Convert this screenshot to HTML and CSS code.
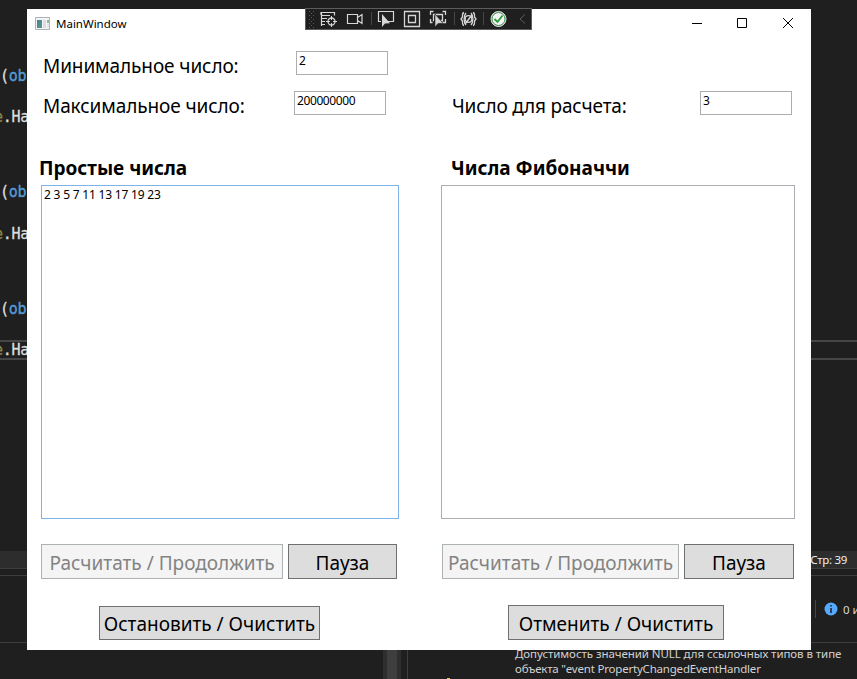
FILE: index.html
```html
<!DOCTYPE html>
<html lang="ru">
<head>
<meta charset="utf-8">
<title>MainWindow</title>
<link rel="stylesheet" href="styles.css">
</head>
<body>
<div class="desktop">
  <main class="editor">
    <div class="line signature"><b>(</b>ob</div>
    <div class="line call"><i>e</i>.Ha</div>
    <div class="line signature gap"><b>(</b>ob</div>
    <div class="line call"><i>e</i>.Ha</div>
    <div class="line signature gap"><b>(</b>ob</div>
    <div class="line call current"><i>e</i>.Ha</div>
  </main>
  <footer class="caret-bar"><span>Стр: 39</span></footer>
  <section class="errors">
    <div class="error-tools">
      <span class="divider"></span>
      <svg width="14" height="14" viewBox="0 0 14 14"><circle cx="7" cy="7" r="6.5" fill="#55aaff"/><path d="M7 3v1.6M7 6v5" stroke="#1f1f1f" stroke-width="1.5"/></svg>
      <span class="count">0 и</span>
    </div>
    <div class="error-body">
      <div class="scroll"></div>
      <div class="error-list"><span class="warn"></span><p><span class="msg1">Допустимость значений NULL для ссылочных типов в типе</span><br><span class="msg2">объекта "event PropertyChangedEventHandler</span></p></div>
    </div>
  </section>

  <div class="window">
    <header class="titlebar">
      <svg class="app-icon" width="15" height="13" viewBox="0 0 15 13"><defs><linearGradient id="g" x2="1" y2="1"><stop stop-color="#5277a8"/><stop offset="1" stop-color="#4fa477"/></linearGradient></defs><path fill="#f4f4f4" stroke="#adb3bb" d="M.5.5h14v12H.5z"/><path fill="url(#g)" d="M2 3h5v8H2z"/><path fill="#dcdfe2" d="M8 3h3v8H8z"/><path fill="#8fb99d" d="M12 3h2v3h-2z"/><path fill="#e4e6e8" d="M12 7h2v4h-2z"/></svg>
      <span class="title">MainWindow</span>
      <div class="controls">
        <svg width="46" height="28" viewBox="0 0 46 28"><path d="M18 14.5h10"/></svg>
        <svg width="45" height="28" viewBox="0 0 45 28"><path d="M17.500 9.500h9v9h-9z"/></svg>
        <svg width="46" height="28" viewBox="0 0 46 28"><path d="M18 9l10 10M28 9L18 19"/></svg>
      </div>
    </header>
    <div class="content">
      <section class="column primes">
        <div class="field min"><label>Минимальное число:</label><div class="input">2</div></div>
        <div class="field max"><label>Максимальное число:</label><div class="input">200000000</div></div>
        <h2>Простые числа</h2>
        <div class="output focused">2 3 5 7 11 13 17 19 23</div>
        <div class="actions"><button class="run" disabled><span>Расчитать / Продолжить</span></button><button class="pause"><span>Пауза</span></button></div>
        <button class="stop"><span>Остановить / Очистить</span></button>
      </section>
      <section class="column fib">
        <div class="field"><label>Число для расчета:</label><div class="input">3</div></div>
        <h2>Числа Фибоначчи</h2>
        <div class="output"></div>
        <div class="actions"><button class="run" disabled><span>Расчитать / Продолжить</span></button><button class="pause"><span>Пауза</span></button></div>
        <button class="stop"><span>Отменить / Очистить</span></button>
      </section>
    </div>
  </div>

  <div class="debugbar">
    <svg width="225" height="20" viewBox="0 0 225 20" fill="none" stroke="#d6d6d6">
      <path stroke="#5a5a5a" stroke-dasharray="1 3" d="M3.500 2v17M7.500 2v17"/><path stroke="#5a5a5a" stroke-dasharray="1 3" d="M5.500 4v15"/>
      <path d="M15 3.500h13.500v3M15 3v3M15 6.500h9M15 9.500h6M15 12.500h4M15 15.500h4M15.500 3v14" stroke-width="1.200"/>
      <circle cx="25.500" cy="12.500" r="3.500" stroke-width="1.300"/><path d="M25.500 7v4M25.500 14v4M20 12.500h4M27 12.500h4"/>
      <path d="M41.500 5.500h10v9h-10zM51.500 8.500l4.500-3v9l-4.500-3" stroke-width="1.200"/>
      <path stroke="#464646" d="M65.500 3v13M148.500 3v13M177.500 3v13"/>
      <path d="M75 12.500h-2.500v-10h15v10H82" stroke-width="1.200"/><path fill="#d6d6d6" stroke="none" d="M76 5v13l3-3.500 5-.2z"/>
      <path d="M98.500 2.500h15v15h-15zM102.500 6.500h7v7h-7z" stroke-width="1.300"/>
      <path d="M124.500 6V2.500h3M136.500 2.500h3V6M124.500 10v3.500h2M139.500 10v3.500h-4M128 11.500h-.5v-6h9v6h-2" stroke-width="1.300"/><path fill="#d6d6d6" stroke="#1f1f1f" stroke-width=".6" d="M129 5v13l3-3.500 5-.2z"/>
      <path d="M158 3.500c-2 .5-1.500 3-1.500 4.500l-1.500 2 1.500 2c0 2-.5 4 1.500 4.500M167 3.500c2 .5 1.500 3 1.500 4.500l1.500 2-1.500 2c0 2 .5 4-1.500 4.500M160 4c-2.500 3-2.500 9 0 12M165 4c2.500 3 2.500 9 0 12" stroke-width="1.300"/><circle cx="162.500" cy="10" r="3.300" stroke-width="1.300"/><path d="M159 15l7-9" stroke-width="1.500"/>
      <circle cx="192.500" cy="10" r="7.500" fill="#f5f5f5" stroke="#dedede"/><circle cx="192.500" cy="10" r="6.500" stroke="#388a45"/><path d="M188.500 10l3 3 5-6.500" stroke="#269b38" stroke-width="1.800"/>
      <path d="M219 5.500l-5 4.500 5 4.500" stroke="#5d5d5d"/>
    </svg>
  </div>
</div>
</body>
</html>
```

FILE: styles.css
```css
* { box-sizing: border-box; }
body { margin: 0; background: #1f1f1f; font-family: "Noto Sans", sans-serif; }
.desktop { position: relative; width: 857px; height: 679px; overflow: hidden; display: flex; flex-direction: column; }

.editor { height: 551px; flex: none; padding-top: 66px; display: grid; grid-template-rows: 41px 75px 42px 75px 39px 20px; align-content: start; }
.line { height: 20px; white-space: pre; font: 15px/20px "DejaVu Sans Mono", monospace; letter-spacing: -.3px; color: #dcdcdc; -webkit-text-stroke: .3px; }
.signature { color: #569cd6; }
.line b { font-weight: 400; color: #dcdcdc; }
.line i { font-style: normal; color: #8a8a45; }
.call { text-indent: -6px; overflow: hidden; }
.current { border: solid #464646; border-width: 2px 0; margin-top: 2px; line-height: 16px; }

.caret-bar { height: 18px; flex: none; background: #2d2d2d; border-bottom: 1px solid #3d3d3d; color: #f0f0f0; font-size: 11.500px; line-height: 18px; display: flex; justify-content: flex-end; padding-right: 10px; letter-spacing: -.3px; }
.errors { flex: 1; margin-top: 6px; border-top: 1px solid #3d3d3d; }
.error-tools { height: 67px; border-bottom: 1px solid #3d3d3d; display: flex; align-items: center; padding-left: 815px; color: #d6d6d6; font-size: 11.500px; white-space: nowrap; overflow: hidden; }
.divider { width: 1px; height: 18px; background: #464646; margin-right: 8px; flex: none; }
.error-tools svg { flex: none; margin-right: 5px; }
.error-body { height: 36px; display: flex; padding-left: 383px; }
.scroll { width: 18px; background: #3e3e3e; border: solid #2e2e2e; border-width: 0 4px; }
.error-list { margin-left: 6px; border-left: 1px solid #3d3d3d; flex: 1; display: flex; align-items: flex-end; }
.warn { width: 3px; height: 1px; margin-left: 39px; background: #e8c94a; }
.error-list p { margin: 0 0 3px 65px; font-size: 11.500px; line-height: 15px; letter-spacing: -.07px; color: #d2d2d2; white-space: nowrap; }
.msg2 { letter-spacing: -.2px; }

.window { position: absolute; left: 27px; top: 9px; width: 784px; height: 641px; background: #fff; color: #000; }
.titlebar { height: 28px; display: flex; align-items: center; padding-left: 8px; }
.title { margin-left: 6px; font-size: 11.500px; line-height: 16px; padding-top: 1px; }
.controls { display: flex; margin-left: auto; }
.controls path { fill: none; stroke: #000; }
.content { display: flex; }
.column { display: flex; flex-direction: column; align-items: flex-start; padding-top: 14px; }
.primes { width: 400px; }
.fib { width: 384px; padding-top: 54px; }
.field { display: flex; height: 24px; margin: 0 0 16px 16px; }
.field label { width: 253px; font-size: 19px; line-height: 30px; letter-spacing: -.1px; white-space: nowrap; }
.max label { width: 251px; }
.fib .field { margin-left: 25px; }
.fib .field label { width: 248px; letter-spacing: -.18px; }
.input { width: 92px; height: 24px; border: 1px solid #abadb3; padding-left: 2px; font-size: 12px; letter-spacing: -.4px; line-height: 18px; }
h2 { margin: 25px 0 0 12px; font-size: 19px; line-height: 24px; height: 29px; white-space: nowrap; }
.fib h2 { margin-left: 24px; }
.output { width: 358px; height: 334px; margin-left: 14px; border: 1px solid #abadb3; padding-left: 2px; font-size: 12px; letter-spacing: -.2px; line-height: 18px; }
.focused { border-color: #7eb4ea; }
.fib .output { width: 354px; }
.actions { display: flex; gap: 5px; margin: 25px 0 0 14px; }
.fib .actions { margin-left: 15px; }
button { height: 35px; padding: 0; border: 1px solid #707070; border-radius: 0; background: #ddd; color: #000; font: 19px/35px "Noto Sans", sans-serif; white-space: nowrap; display: flex; justify-content: center; align-items: center; }
button span { position: relative; top: 2px; }
button:disabled { background: #f4f4f4; border-color: #adb2b5; color: #838383; }
.run { width: 242px; }
.pause { width: 109px; }
.fib .run { width: 237px; }
.fib .pause { width: 110px; }
.stop { width: 221px; height: 34px; margin: 27px 0 0 72px; }
.primes .stop span { top: 1px; }
.fib .stop { width: 216px; height: 35px; margin: 26px 0 0 81px; }

.debugbar { position: absolute; left: 305px; top: 8px; width: 227px; height: 22px; background: #1f1f1f; border: 1px solid #5c5c5c; }
.debugbar svg { display: block; }
```
